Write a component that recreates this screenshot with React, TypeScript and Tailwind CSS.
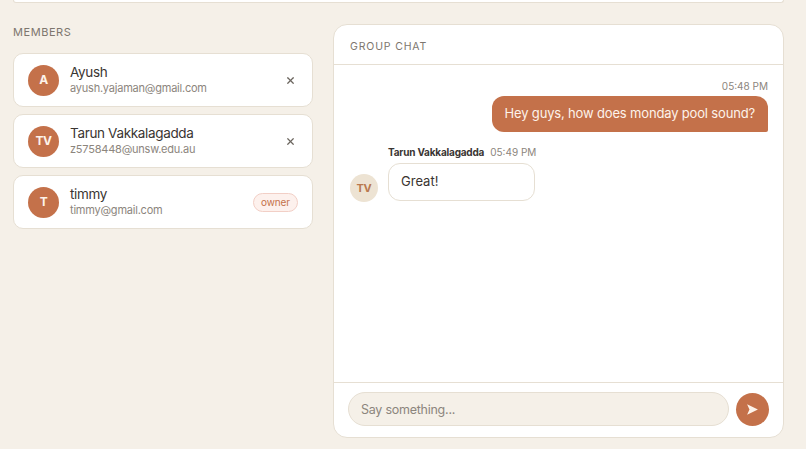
import React from "react";
import { X } from "lucide-react";

const font = { fontFamily: "Inter" };

const members = [
  { initials: "A", name: "Ayush", email: "ayush.yajaman@gmail.com" },
  { initials: "TV", name: "Tarun Vakkalagadda", email: "z5758448@unsw.edu.au" },
  { initials: "T", name: "timmy", email: "timmy@gmail.com", owner: true },
];

const MemberCard = ({ initials, name, email, owner }: { initials: string; name: string; email: string; owner?: boolean }) => (
  <div className="flex h-[54px] items-center rounded-[10px] border border-[#e6dfd3] bg-white px-[14px]">
    <div className="flex h-[31px] w-[31px] shrink-0 items-center justify-center rounded-full bg-[#c4714a] text-[12px] font-bold tracking-[-0.03em] text-[#fdf3ea]">
      {initials}
    </div>
    <div className="ml-[11px] flex-1">
      <p className="text-[13.5px] leading-[17px] tracking-[-0.025em] text-[#3a3532]">{name}</p>
      <p className="text-[11px] leading-[15px] tracking-[-0.02em] text-[#8c857d]">{email}</p>
    </div>
    {owner ? (
      <span className="rounded-full border border-[#f2cfc6] bg-[#fdf1ed] px-[7px] py-[1px] text-[10px] leading-[15px] tracking-[-0.01em] text-[#c4714a]">
        owner
      </span>
    ) : (
      <X className="mr-[2px] h-[11px] w-[11px] text-[#6b655e]" strokeWidth={2.6} />
    )}
  </div>
);

export default function App() {
  return (
    <div className="h-[449px] w-[806px] overflow-hidden bg-[#f5f0e8] pl-[13px] pr-[22px]" style={font}>
      <div className="h-[3px] rounded-b-[12px] border border-t-0 border-[#e6dfd3] bg-white" />
      <div className="mt-[21px] flex gap-[20px]">
        <div className="w-[300px]">
          <h2 className="mt-[1px] text-[11px] leading-[14px] tracking-[0.05em] text-[#7d766e]">MEMBERS</h2>
          <div className="mt-[14px] flex flex-col gap-[7px]">
            {members.map((m) => (
              <MemberCard key={m.initials} {...m} />
            ))}
          </div>
        </div>
        <div className="flex h-[414px] flex-1 flex-col rounded-[14px] border border-[#e6dfd3] bg-white">
          <div className="flex h-[40px] shrink-0 items-center border-b border-[#e6dfd3] px-[16px] pt-[4px] text-[10.5px] tracking-[0.08em] text-[#7d766e]">
            GROUP CHAT
          </div>
          <div className="flex-1 pl-[16px] pr-[15px] pt-[14px]">
            <p className="text-right text-[10px] leading-[14px] text-[#8c857d]">05:48 PM</p>
            <div className="mt-[3px] flex justify-end">
              <div className="flex h-[36px] items-center rounded-[12px] rounded-br-[2px] bg-[#c4714a] px-[13px] text-[13px] tracking-[-0.0125em] text-[#fdf3ea]">
                Hey guys, how does monday pool sound?
              </div>
            </div>
            <div className="mt-[13px] flex items-end gap-[10px]">
              <div className="mb-[-1px] flex h-[28px] w-[28px] items-center justify-center rounded-full bg-[#ede3d3] text-[11px] font-bold tracking-[-0.03em] text-[#b9794f]">
                TV
              </div>
              <div>
                <p className="text-[10px] leading-[14px] text-[#8c857d]">
                  <span className="font-bold tracking-[-0.02em] text-[#3a3532]">Tarun Vakkalagadda</span>
                  <span className="ml-[6px]">05:49 PM</span>
                </p>
                <div className="mt-[4px] flex h-[38px] w-[147px] items-start rounded-[12px] border border-[#e6dfd3] bg-white px-[12px] pt-[9px] text-[13px] leading-[17px] text-[#3a3532]">
                  Great!
                </div>
              </div>
            </div>
          </div>
          <div className="flex h-[55px] shrink-0 items-center gap-[7px] border-t border-[#e6dfd3] pb-[2px] pl-[14px] pr-[14px]">
            <input
              placeholder="Say something..."
              className="h-[34px] flex-1 rounded-full border border-[#e6dfd3] bg-[#f5f0e8] px-[12px] text-[12.5px] tracking-[-0.02em] outline-none placeholder:text-[#8c857d]"
            />
            <button type="button" className="flex h-[33px] w-[33px] items-center justify-center rounded-full bg-[#c4714a]">
              <svg viewBox="0 0 12 12" className="h-[13px] w-[13px]" fill="#fdf3ea">
                <path d="M1 1.2 11 6 1 10.8 3.2 6z" />
              </svg>
            </button>
          </div>
        </div>
      </div>
    </div>
  );
}
